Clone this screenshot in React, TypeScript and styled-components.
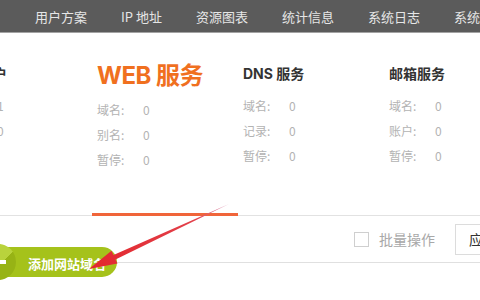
import styled, { createGlobalStyle } from 'styled-components';

const GlobalStyle = createGlobalStyle`
  html, body {
    margin: 0;
    padding: 0;
    background: #fff;
  }
  body {
    font-family: "Noto Sans CJK SC", "Noto Sans", sans-serif;
  }
  #root {
    width: 480px;
    height: 300px;
    overflow: hidden;
  }
`;

const Page = styled.div`
  position: relative;
  width: 480px;
  height: 300px;
  overflow: hidden;
`;

const NavBar = styled.nav`
  display: flex;
  height: 32px;
  padding-left: 18px;
  background: #5b5b5b;
  border-bottom: 1px solid #a3a3a3;
  white-space: nowrap;
`;

const NavItem = styled.a`
  display: flex;
  align-items: center;
  padding: 0 17px;
  font-size: 13px;
  color: #e6e6e6;
  text-decoration: none;
`;

const ServiceTabs = styled.div`
  display: flex;
  height: 182px;
  margin-left: -54px;
  border-bottom: 1px solid #e2e2e2;
`;

const ServiceCard = styled.div<{ $active?: boolean }>`
  flex: 0 0 146px;
  box-sizing: border-box;
  padding: 25px 0 0 5px;
  margin-bottom: -1px;
  border-bottom: 3px solid ${(p) => (p.$active ? '#f0653a' : 'transparent')};
`;

const CardTitle = styled.div<{ $active?: boolean }>`
  display: flex;
  align-items: center;
  height: 30px;
  font-family: Inter, "Noto Sans CJK SC", sans-serif;
  font-weight: 700;
  font-size: ${(p) => (p.$active ? 24 : 14)}px;
  letter-spacing: ${(p) => (p.$active ? '-0.5px' : '0')};
  color: ${(p) => (p.$active ? '#f0701f' : '#333')};
  white-space: nowrap;
`;

const StatList = styled.div<{ $active?: boolean }>`
  margin-top: ${(p) => (p.$active ? 9 : 5)}px;
`;

const StatRow = styled.div`
  display: flex;
  align-items: center;
  height: 25px;
  font-size: 12px;
  color: #b3b3b3;
`;

const StatLabel = styled.span`
  width: 46px;
`;

const Toolbar = styled.div`
  display: flex;
  align-items: center;
  justify-content: flex-end;
  height: 46px;
  margin-right: -31px;
  border-bottom: 1px solid #e0e0e0;
`;

const Checkbox = styled.span`
  width: 15px;
  height: 15px;
  box-sizing: border-box;
  border: 1px solid #cfcfcf;
  margin-right: 10px;
`;

const BatchLabel = styled.span`
  font-size: 14px;
  color: #a8a8a8;
  margin-right: 20px;
`;

const ApplyButton = styled.button`
  height: 31px;
  box-sizing: border-box;
  padding: 0 13px;
  border: 1px solid #dcdcdc;
  background: #fff;
  font-family: "Noto Sans CJK SC", sans-serif;
  font-size: 14px;
  color: #333;
`;

const ActionRow = styled.div`
  position: relative;
  display: flex;
  margin-top: -16px;
`;

const AddButton = styled.button`
  position: relative;
  display: flex;
  align-items: center;
  height: 30px;
  margin-left: -20px;
  padding: 2px 11px 0 48px;
  border: none;
  border-radius: 15px;
  background: #a5c21b;
  font-family: "Noto Sans CJK SC", sans-serif;
  font-size: 13px;
  font-weight: 700;
  color: #fff;
`;

const AddIcon = styled.span`
  position: absolute;
  left: 0;
  top: -3px;
  width: 36px;
  height: 36px;
  border-radius: 50%;
  background: linear-gradient(135deg, #b9d33c 0 56%, #97b315 56%);

  &::before,
  &::after {
    content: '';
    position: absolute;
    background: #fff;
    left: 50%;
    top: 50%;
    transform: translate(-50%, -50%);
  }
  &::before {
    width: 16px;
    height: 4px;
  }
  &::after {
    width: 4px;
    height: 16px;
  }
`;

const ArrowLayer = styled.svg`
  position: absolute;
  left: 0;
  top: 0;
  pointer-events: none;
`;

const navItems = ['用户方案', 'IP 地址', '资源图表', '统计信息', '系统日志', '系统设置'];

const services = [
  { title: '我的账户', rows: [['', '1'], ['', '0']] },
  { title: 'WEB 服务', active: true, rows: [['域名:', '0'], ['别名:', '0'], ['暂停:', '0']] },
  { title: 'DNS 服务', rows: [['域名:', '0'], ['记录:', '0'], ['暂停:', '0']] },
  { title: '邮箱服务', rows: [['域名:', '0'], ['账户:', '0'], ['暂停:', '0']] },
];

export default function App() {
  return (
    <Page>
      <GlobalStyle />
      <NavBar>
        {navItems.map((item) => (
          <NavItem key={item}>{item}</NavItem>
        ))}
      </NavBar>

      <ServiceTabs>
        {services.map((s) => (
          <ServiceCard key={s.title} $active={s.active}>
            <CardTitle $active={s.active}>{s.title}</CardTitle>
            <StatList $active={s.active}>
              {s.rows.map(([label, value], i) => (
                <StatRow key={i}>
                  <StatLabel>{label}</StatLabel>
                  {value}
                </StatRow>
              ))}
            </StatList>
          </ServiceCard>
        ))}
      </ServiceTabs>

      <Toolbar>
        <Checkbox />
        <BatchLabel>批量操作</BatchLabel>
        <ApplyButton>应用</ApplyButton>
      </Toolbar>

      <ActionRow>
        <AddButton>
          <AddIcon />
          添加网站域名
        </AddButton>
      </ActionRow>

      <ArrowLayer width="480" height="300" viewBox="0 0 480 300">
        <defs>
          <linearGradient id="arrowFade" x1="229" y1="204" x2="89" y2="269" gradientUnits="userSpaceOnUse">
            <stop offset="0" stopColor="#d88ab0" />
            <stop offset="0.25" stopColor="#e2404a" />
            <stop offset="1" stopColor="#e3262c" />
          </linearGradient>
        </defs>
        <polygon
          points="89,269 111.5,250.8 113.5,254.9 229,204 115.5,259.5 117.5,263.6"
          fill="url(#arrowFade)"
        />
      </ArrowLayer>
    </Page>
  );
}
